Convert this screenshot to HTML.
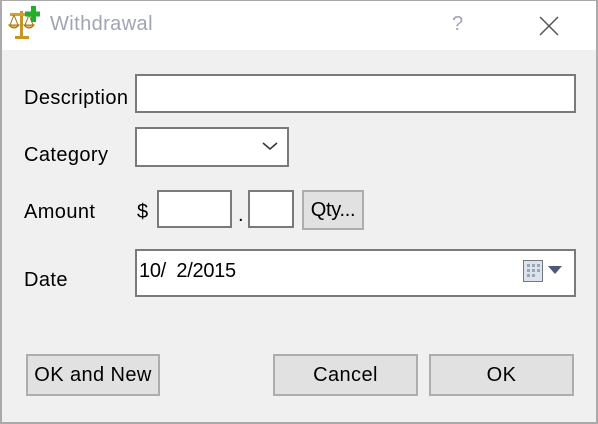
<!DOCTYPE html>
<html><head><style>
*{box-sizing:border-box;margin:0;padding:0}
body{width:598px;height:424px;overflow:hidden;background:#f0f0f0;font-family:"Liberation Sans",sans-serif;font-size:20px;color:#000;position:relative}
.win{position:absolute;left:0;top:0;width:598px;height:424px;border:2px solid #aaa;border-top:1px solid #aaa}
.title{position:absolute;left:0;top:0;width:598px;height:50px;background:#fff}
.t{position:absolute;font-size:20px;color:#a0a4b4}
.lbl{position:absolute;left:24px;letter-spacing:0.4px}
.box{position:absolute;background:#fff;border:2px solid #7a7a7a}
.btn{position:absolute;background:#e1e1e1;border:2px solid #adadad;text-align:center;letter-spacing:0.4px}
</style></head><body>
<div class="title">
<svg style="position:absolute;left:6px;top:5px" width="34" height="36" viewBox="0 0 34 36">
<rect x="14" y="6" width="3" height="26" fill="#c8961e"/>
<rect x="4" y="8" width="22" height="3" fill="#d4a32c"/>
<path d="M3 20 Q8 26 13 20Z" fill="#e0b450" stroke="#a07010"/>
<path d="M18 20 Q23 26 28 20Z" fill="#e0b450" stroke="#a07010"/>
<line x1="8" y1="10" x2="4" y2="20" stroke="#a07010"/><line x1="8" y1="10" x2="12" y2="20" stroke="#a07010"/>
<line x1="23" y1="10" x2="19" y2="20" stroke="#a07010"/><line x1="23" y1="10" x2="27" y2="20" stroke="#a07010"/>
<rect x="9" y="31" width="14" height="3" fill="#c8961e"/>
<rect x="25" y="1" width="5" height="16" fill="#22b02c"/><rect x="19" y="6.5" width="16" height="5" fill="#22b02c"/>
</svg>
<div class="t" style="left:50px;top:13px;letter-spacing:0.4px">Withdrawal</div>
<div class="t" style="left:452px;top:13px">?</div>
<svg style="position:absolute;left:538px;top:15px" width="22" height="22"><path d="M2 2L20 20M20 2L2 20" stroke="#555" stroke-width="1.5"/></svg>
</div>

<div class="lbl" style="top:87px">Description</div>
<div class="box" style="left:135px;top:74px;width:441px;height:39px"></div>

<div class="lbl" style="top:144px">Category</div>
<div class="box" style="left:135px;top:127px;width:154px;height:40px"></div>
<svg style="position:absolute;left:262px;top:141px" width="16" height="10"><path d="M1 2L8 8L15 2" stroke="#333" stroke-width="1.5" fill="none"/></svg>

<div class="lbl" style="top:201px">Amount</div>
<div style="position:absolute;left:137px;top:201px">$</div>
<div class="box" style="left:157px;top:190px;width:75px;height:38px"></div>
<div style="position:absolute;left:238px;top:204px">.</div>
<div class="box" style="left:248px;top:190px;width:46px;height:38px"></div>
<div class="btn" style="left:302px;top:190px;width:62px;height:40px;line-height:36px;letter-spacing:-0.3px">Qty...</div>

<div class="lbl" style="top:269px">Date</div>
<div class="box" style="left:135px;top:249px;width:441px;height:48px"></div>
<div style="position:absolute;left:139px;top:260px;letter-spacing:-0.3px">10/&nbsp; 2/2015</div>
<svg style="position:absolute;left:522px;top:259px" width="46" height="28">
<rect x="1.5" y="1.5" width="19" height="21" fill="#dde3ec" stroke="#707880"/>
<g fill="#9aa6b6"><rect x="5" y="5" width="3" height="3"/><rect x="10" y="5" width="3" height="3"/><rect x="15" y="5" width="3" height="3"/><rect x="5" y="10" width="3" height="3"/><rect x="10" y="10" width="3" height="3"/><rect x="15" y="10" width="3" height="3"/><rect x="5" y="15" width="3" height="3"/><rect x="10" y="15" width="3" height="3"/></g>
<path d="M26 7L40 7L33 15Z" fill="#4a5a78"/>
</svg>

<div class="btn" style="left:26px;top:354px;width:134px;height:42px;line-height:38px">OK and New</div>
<div class="btn" style="left:273px;top:354px;width:145px;height:42px;line-height:38px">Cancel</div>
<div class="btn" style="left:429px;top:354px;width:145px;height:42px;line-height:38px">OK</div>
<div class="win"></div>
</body></html>
